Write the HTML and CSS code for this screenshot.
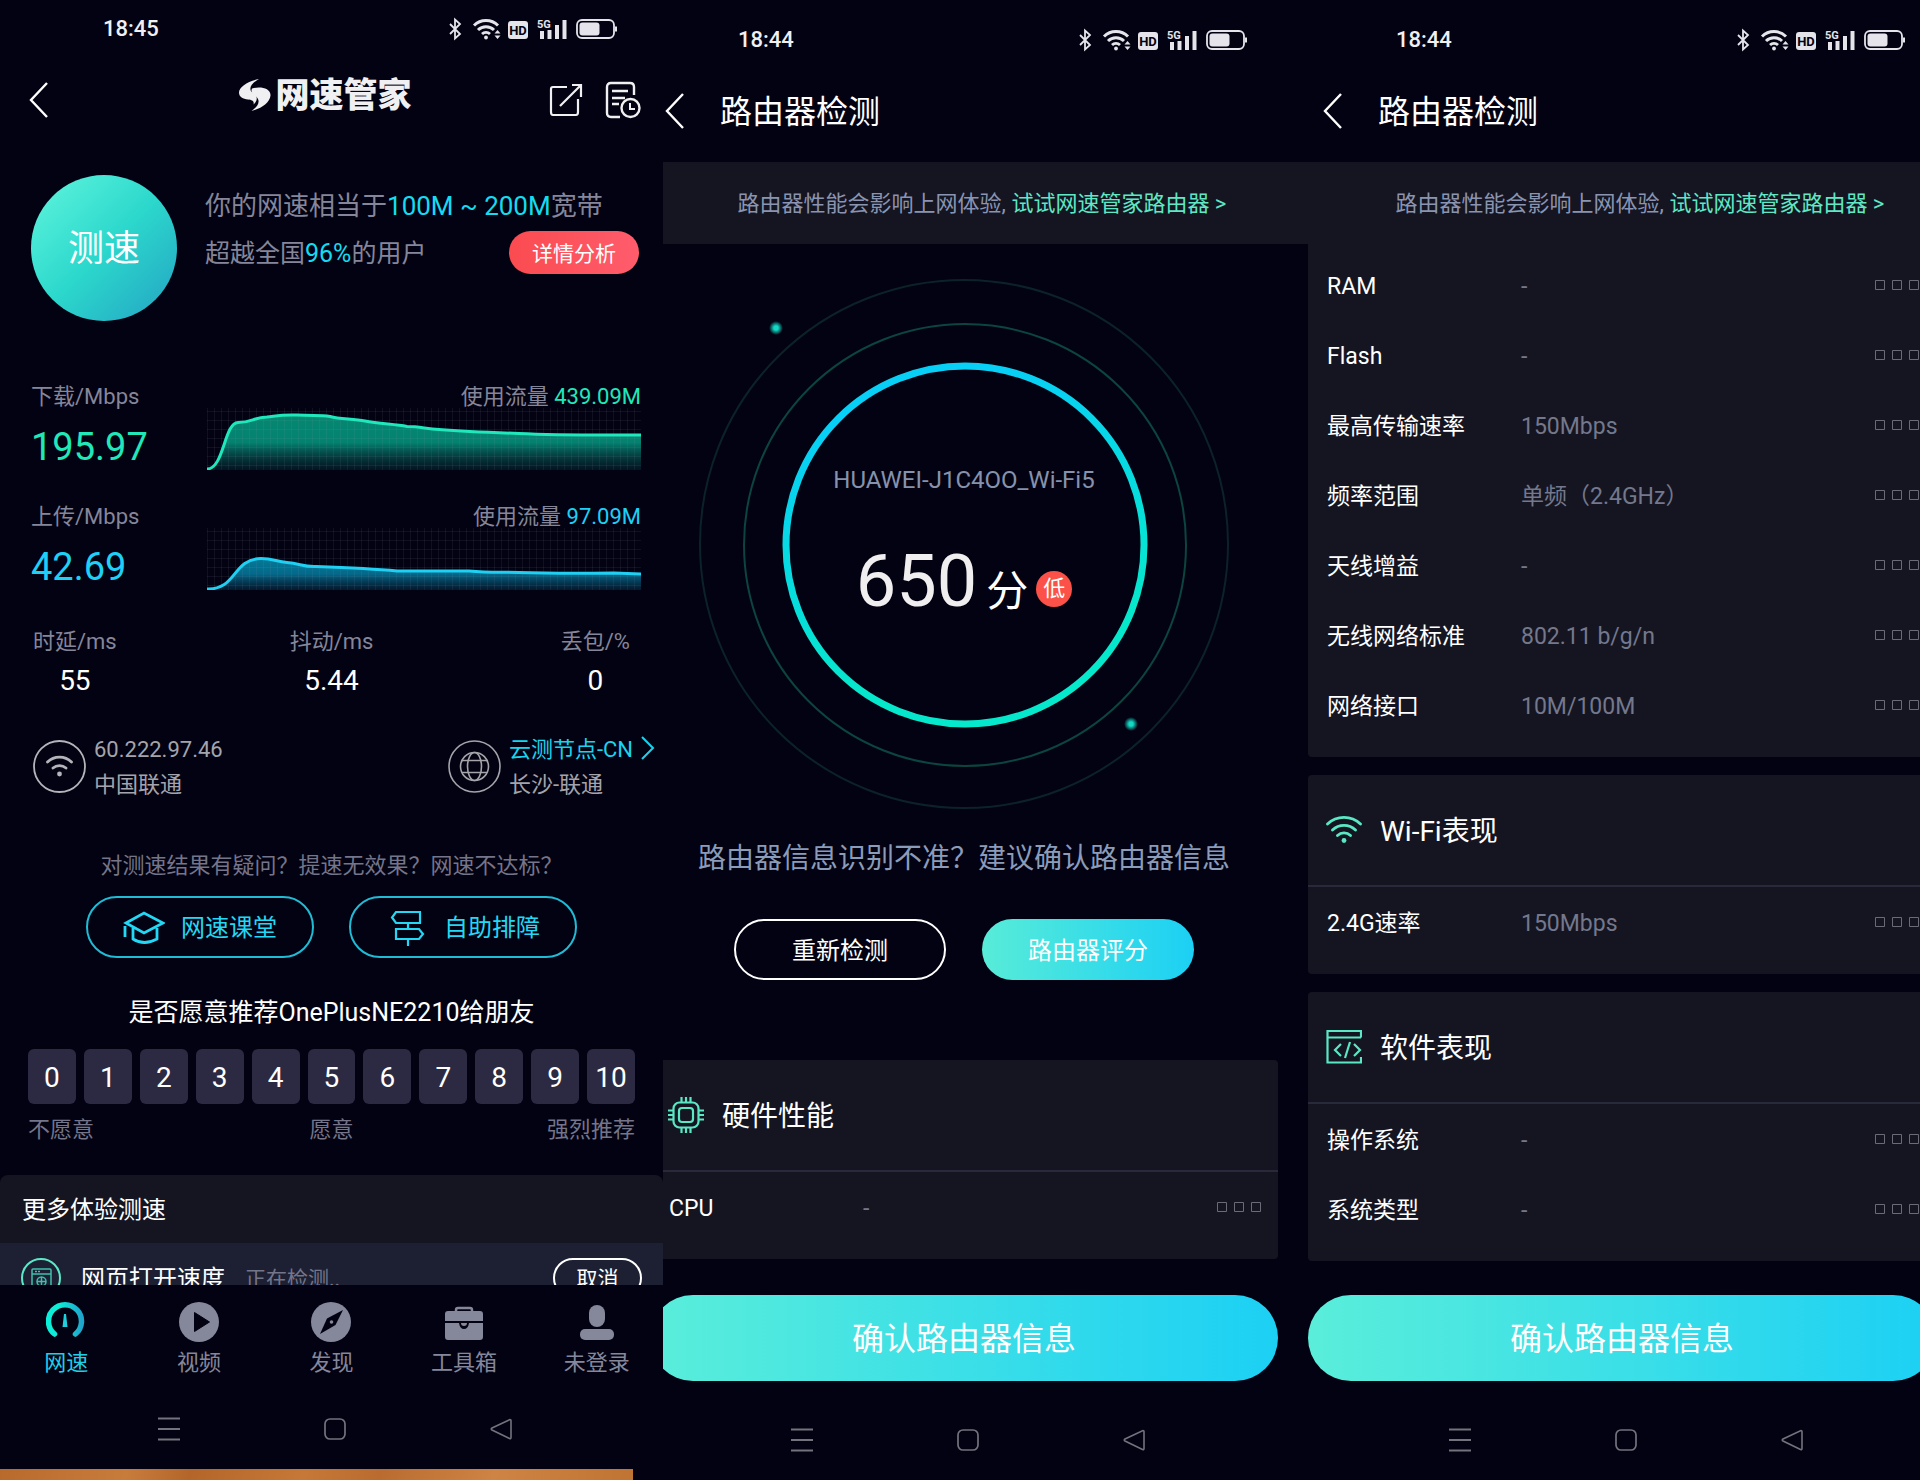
FILE: index.html
```html
<!DOCTYPE html>
<html lang="zh-CN">
	<head>
		<meta charset="utf-8" />
		<title>网速管家</title>
		<meta name="viewport" content="width=device-width, initial-scale=1.0">
		<link rel="stylesheet" href="styles.css">
	</head>
	<body>
		<!-- shared icons -->
		<svg class="sprite" aria-hidden="true">
			<symbol id="statusIcons" viewBox="0 0 168 24">
				<path d="M1 7l10 10-5 4.500V2.500L11 7 1 17" fill="none" stroke="#e4e4ea" stroke-width="1.800"/>
				<g fill="none" stroke="#e4e4ea" stroke-width="3">
					<path d="M25 8.500a17 17 0 0 1 24 0"/>
					<path d="M29 13a11.500 11.500 0 0 1 16 0"/>
					<path d="M33 17a6 6 0 0 1 8 0"/>
				</g>
				<circle cx="37" cy="20.500" r="1.900" fill="#e4e4ea"/>
				<path d="M45.500 16.500l3-3.500 3 3.500zM45.500 18.500l3 3.500 3-3.500z" fill="#e4e4ea"/>
				<rect x="59" y="4" width="20" height="18" rx="3" fill="#e4e4ea"/>
				<text x="69" y="18" text-anchor="middle" font-size="13" font-weight="700" fill="#030212">HD</text>
				<text x="88" y="11" font-size="11" font-weight="700" fill="#e4e4ea">5G</text>
				<path d="M91 14h4v8h-4zM98.500 13h4v9h-4zM106 8h4v14h-4zM113.500 3h4v19h-4z" fill="#e4e4ea"/>
				<rect x="128" y="3" width="37" height="18" rx="5" fill="none" stroke="#e4e4ea" stroke-width="1.800"/>
				<rect x="130.500" y="5.500" width="20" height="13" rx="3" fill="#e4e4ea"/>
				<path d="M167 9.500v5" stroke="#e4e4ea" stroke-width="2"/>
			</symbol>
			<symbol id="back" viewBox="0 0 19 36">
				<path d="M18 1L2 18l16 17" fill="none" stroke="#fff" stroke-width="2.400"/>
			</symbol>
			<symbol id="squares" viewBox="0 0 44 10">
				<path d="M.500 .500h9v9h-9zM17.500 .500h9v9h-9zM34.500 .500h9v9h-9z" fill="none" stroke="#6a6a78"/>
			</symbol>
			<symbol id="navMenu" viewBox="0 0 22 24">
				<path d="M0 1.500h22M0 12h22M0 22.500h22" fill="none" stroke="#73737d" stroke-width="1.800"/>
			</symbol>
			<symbol id="navHome" viewBox="0 0 22 24">
				<rect x="1" y="2" width="20" height="20" rx="5" fill="none" stroke="#73737d" stroke-width="1.700"/>
			</symbol>
			<symbol id="navBack" viewBox="0 0 22 24">
				<path d="M20 2.500q1 0 1 1v17q0 1.500-1.500 1L2 13q-1.500-1 0-2z" fill="none" stroke="#73737d" stroke-width="1.600"/>
			</symbol>
		</svg>

		<main class="screens">
			<!-- speed test result -->
			<section class="screen">
				<div class="phone">
					<div class="status"><span>18:45</span><svg class="status-icons"><use href="#statusIcons"/></svg></div>
					<header class="home-head">
						<button class="back" aria-label="返回"><svg width="19" height="36"><use href="#back"/></svg></button>
						<h1 class="brand">
							<svg width="32" height="34" viewBox="0 0 32 34" fill="#f0f0f2">
								<path d="M20 1C9 3 0 9 0 14.500c0 4.500 4 6.500 9 7 4 .4 6.500 1.500 5.500 5 4-3.500 4.500-8 .5-10.500C8.500 12 11 6 20 1z"/>
								<path d="M13 10.500c8-2.500 19-.5 18.500 7-.5 7-9 13-19 15.500 5-3.500 8.500-8 6.500-12-2-3.500-8.500-5-6-10.500z"/>
							</svg>
							网速管家
						</h1>
						<div class="head-tools">
							<button aria-label="分享">
								<svg width="34" height="36" viewBox="0 0 34 36" fill="none" stroke="#f0f0f2" stroke-width="2.200">
									<path d="M18 5H4q-2 0-2 2v23q0 3 2 3h23q2 0 2-3V17M11 24L31 4M23 3h9v12"/>
								</svg>
							</button>
							<button aria-label="测速记录">
								<svg width="36" height="38" viewBox="0 0 36 38" fill="none" stroke="#f0f0f2" stroke-width="2.400">
									<path d="M15 36H6q-4 0-4-4V6q0-4 4-4h19q4 0 4 4v8M7 10h16M7 17h13M7 23h7"/>
									<circle cx="25.500" cy="27" r="9"/>
									<path d="M25 22v6h5" stroke-width="2"/>
								</svg>
							</button>
						</div>
					</header>

					<div class="hero">
						<button class="start">测速</button>
						<div class="hero-text">
							<p class="grade">你的网速相当于<em>100M ~ 200M</em>宽带</p>
							<div class="rank">
								<p>超越全国<em>96%</em>的用户</p>
								<button class="analyse">详情分析</button>
							</div>
						</div>
					</div>

					<div class="metric down">
						<div class="metric-name">
							<p>下载/Mbps</p>
							<strong>195.97</strong>
						</div>
						<div class="metric-chart">
							<p>使用流量 <em>439.09M</em></p>
							<svg class="chart" viewBox="0 0 434 62" preserveAspectRatio="none">
								<defs>
									<pattern id="grid" width="7" height="9" patternUnits="userSpaceOnUse">
										<path d="M.500 0v9M0 3.500h7" stroke="#a0a0b4" stroke-opacity=".09" fill="none"/>
									</pattern>
									<linearGradient id="downFill" x1="0" y1="0" x2="0" y2="1">
										<stop offset="0" stop-color="#048872"/>
										<stop offset=".5" stop-color="#048270"/>
										<stop offset="1" stop-color="#06303a" stop-opacity=".4"/>
									</linearGradient>
								</defs>
								<path d="M0 61C17 61 17 15 31 14.500c14 0 15-5 29-5.500 15-2 15-2.500 30-2 16 1 23 0 33 1.500 10 3 22 2 35 4.500 14 3 29 3 42 5.500 12 0 18 2 32 3 25 2 50 3 80 4 40 2 80 1.500 122 1.500V62H0z" fill="url(#downFill)"/>
								<rect width="434" height="62" fill="url(#grid)"/>
								<path d="M0 61C17 61 17 15 31 14.500c14 0 15-5 29-5.500 15-2 15-2.500 30-2 16 1 23 0 33 1.500 10 3 22 2 35 4.500 14 3 29 3 42 5.500 12 0 18 2 32 3 25 2 50 3 80 4 40 2 80 1.500 122 1.500" fill="none" stroke="#20e8bd" stroke-width="3"/>
							</svg>
						</div>
					</div>
					<div class="metric up">
						<div class="metric-name">
							<p>上传/Mbps</p>
							<strong>42.69</strong>
						</div>
						<div class="metric-chart">
							<p>使用流量 <em>97.09M</em></p>
							<svg class="chart" viewBox="0 0 434 62" preserveAspectRatio="none">
								<defs>
									<linearGradient id="upFill" x1="0" y1="0" x2="0" y2="1">
										<stop offset="0" stop-color="#047a98"/>
										<stop offset=".5" stop-color="#05688a"/>
										<stop offset="1" stop-color="#05304a" stop-opacity=".5"/>
									</linearGradient>
								</defs>
								<path d="M0 61C30 62 25 31 54 30.500c12 0 15 3 26 4 13 1 15 4 27 4 27 1 55 2 83 4.500h72c20 2 30 1 50 1.500 30 1 60 1 95 .5l27 1V62H0z" fill="url(#upFill)"/>
								<rect width="434" height="62" fill="url(#grid)"/>
								<path d="M0 61C30 62 25 31 54 30.500c12 0 15 3 26 4 13 1 15 4 27 4 27 1 55 2 83 4.500h72c20 2 30 1 50 1.500 30 1 60 1 95 .5l27 1" fill="none" stroke="#1fd0f2" stroke-width="3"/>
							</svg>
						</div>
					</div>

					<dl class="stats">
						<div><dt>时延/ms</dt><dd>55</dd></div>
						<div><dt>抖动/ms</dt><dd>5.44</dd></div>
						<div><dt>丢包/%</dt><dd>0</dd></div>
					</dl>

					<div class="hosts">
						<div class="host">
							<svg width="53" height="53" viewBox="0 0 53 53" fill="none" stroke="#b4b4ba" stroke-width="1.800">
								<circle cx="26.500" cy="26.500" r="25.500"/>
								<g stroke-width="2.800" stroke-linecap="round">
									<path d="M14.500 22a17 17 0 0 1 24 0M20 28a10 10 0 0 1 13 0"/>
								</g>
								<circle cx="26.500" cy="34" r="2.400" fill="#b4b4ba" stroke="none"/>
							</svg>
							<p>60.222.97.46<br>中国联通</p>
						</div>
						<div class="host">
							<svg width="53" height="53" viewBox="0 0 53 53" fill="none" stroke="#a4a4aa" stroke-width="1.600">
								<circle cx="26.500" cy="26.500" r="25.500"/>
								<circle cx="26.500" cy="26.500" r="14"/>
								<ellipse cx="26.500" cy="26.500" rx="7" ry="14"/>
								<path d="M14 20.500h25M14 32.500h25"/>
							</svg>
							<p><a href="#">云测节点-CN</a><br>长沙-联通</p>
							<svg class="host-more" width="14" height="24" viewBox="0 0 14 24" fill="none" stroke="#18d4ee" stroke-width="2"><path d="M1 1l11 11L1 23"/></svg>
						</div>
					</div>

					<p class="doubt">对测速结果有疑问？提速无效果？网速不达标？</p>
					<div class="helpers">
						<button>
							<svg width="42" height="34" viewBox="0 0 42 34" fill="none" stroke="#22d8f4" stroke-width="2.800">
								<path d="M3 12L21 2l19 10-19 10zM10 17v11q11 7 24 0V17"/>
								<path d="M2 15v11"/>
							</svg>
							网速课堂
						</button>
						<button>
							<svg width="42" height="36" viewBox="0 0 42 36" fill="none" stroke="#22d8f4" stroke-width="2.200">
								<path d="M10 2h24v11H10l-4-5.500zM10 19h23l4 5-4 5H10zM22 13v6M22 29v7"/>
							</svg>
							自助排障
						</button>
					</div>

					<p class="survey-title">是否愿意推荐OnePlusNE2210给朋友</p>
					<div class="survey">
						<button>0</button>
						<button>1</button>
						<button>2</button>
						<button>3</button>
						<button>4</button>
						<button>5</button>
						<button>6</button>
						<button>7</button>
						<button>8</button>
						<button>9</button>
						<button>10</button>
					</div>
					<div class="survey-scale"><span>不愿意</span><span>愿意</span><span>强烈推荐</span></div>

					<div class="more">
						<h2>更多体验测速</h2>
						<div class="more-row">
							<svg width="40" height="40" viewBox="0 0 40 40" fill="none" stroke="#3fbfae" stroke-width="1.500">
								<circle cx="20" cy="20" r="19" stroke="#5ae8c8" stroke-width="2"/>
								<path d="M11 32V12q0-1 1-1h17q1 0 1 1v20M11 16h19"/>
								<path d="M14 13.500h6" stroke-dasharray="2 1"/>
								<circle cx="20.500" cy="23.500" r="4.500"/>
								<path d="M16 23.500h9M20.500 19v9"/>
							</svg>
							<span class="more-name">网页打开速度</span>
							<span class="more-state">正在检测..</span>
							<button>取消</button>
						</div>
					</div>

					<nav class="tabs">
						<a href="#" class="on">
							<svg width="40" height="48" viewBox="0 0 40 48" fill="none">
								<linearGradient id="gaugeTab"><stop offset=".3" stop-color="#0ceed8"/><stop offset="1" stop-color="#1fa6cc"/></linearGradient>
								<path d="M8.500 37A16.500 16.500 0 1 1 29.500 37" stroke="url(#gaugeTab)" stroke-width="5.500" stroke-linecap="round"/>
								<path d="M18 17h2l1.500 13h-5z" fill="#1fd0dc"/>
							</svg>
							网速
						</a>
						<a href="#">
							<svg width="40" height="48" viewBox="0 0 40 48"><circle cx="20" cy="25" r="20" fill="#85879b"/><path d="M15.500 15.500l15 9.500-15 9.500z" fill="#030212" stroke="#030212" stroke-linejoin="round"/></svg>
							视频
						</a>
						<a href="#">
							<svg width="40" height="48" viewBox="0 0 40 48"><circle cx="20" cy="25" r="20" fill="#85879b"/><path d="M32 13l-7.500 15L9 37l7-15.500z" fill="#030212"/><circle cx="20.500" cy="25" r="1.800" fill="#85879b"/></svg>
							发现
						</a>
						<a href="#">
							<svg width="40" height="48" viewBox="0 0 40 48" fill="#85879b">
								<path d="M12 16v-3q0-2 2-2h12q2 0 2 2v3" fill="none" stroke="#85879b" stroke-width="2.500"/>
								<path d="M4 14h32q3 0 3 3v7H1v-7q0-3 3-3zM1 26h14q1 6 5 6t5-6h14v14q0 3-3 3H4q-3 0-3-3z"/>
								<path d="M17 26h6q0 3-3 3t-3-3z"/>
							</svg>
							工具箱
						</a>
						<a href="#">
							<svg width="40" height="48" viewBox="0 0 40 48" fill="#85879b"><rect x="12" y="8" width="16" height="22" rx="8"/><rect x="3" y="32" width="34" height="11" rx="5"/></svg>
							未登录
						</a>
					</nav>
					<div class="sysnav">
						<svg><use href="#navMenu"/></svg>
						<svg><use href="#navHome"/></svg>
						<svg><use href="#navBack"/></svg>
					</div>
					<div class="wood"></div>
				</div>
			</section>

			<!-- router score -->
			<section class="screen">
				<div class="phone router cut-left">
					<div class="status"><span>18:44</span><svg class="status-icons"><use href="#statusIcons"/></svg></div>
					<header class="router-head">
						<button class="back" aria-label="返回"><svg width="19" height="36"><use href="#back"/></svg></button>
						<h1>路由器检测</h1>
					</header>
					<p class="banner">路由器性能会影响上网体验, <a href="#">试试网速管家路由器 &gt;</a></p>

					<div class="gauge">
						<svg width="530" height="530" viewBox="0 0 530 530" fill="none">
							<defs>
								<linearGradient id="ring" x1=".35" y1="0" x2=".65" y2="1">
									<stop offset=".1" stop-color="#08cff5"/>
									<stop offset=".8" stop-color="#06e8cb"/>
								</linearGradient>
								<radialGradient id="dot">
									<stop offset=".3" stop-color="#12d8c4"/>
									<stop offset="1" stop-color="#12d8c4" stop-opacity="0"/>
								</radialGradient>
							</defs>
							<circle cx="265" cy="265" r="264" stroke="#0c2229" stroke-width="2"/>
							<circle cx="266" cy="266" r="221" stroke="#0c443f" stroke-width="2"/>
							<circle cx="266" cy="266" r="179" stroke="url(#ring)" stroke-width="7"/>
							<circle cx="77" cy="49" r="7" fill="url(#dot)"/>
							<circle cx="432" cy="445" r="7" fill="url(#dot)"/>
						</svg>
						<div class="gauge-text">
							<p class="ssid">HUAWEI-J1C4OO_Wi-Fi5</p>
							<p class="score"><strong>650</strong><span>分</span><b>低</b></p>
						</div>
					</div>

					<p class="hint">路由器信息识别不准？建议确认路由器信息</p>
					<div class="router-actions">
						<button>重新检测</button>
						<button class="fill">路由器评分</button>
					</div>

					<section class="card">
						<h2>
							<svg width="36" height="36" viewBox="0 0 36 36" fill="none" stroke="#5ae8c4" stroke-width="2.200">
								<rect x="5.500" y="5.500" width="25" height="25" rx="6"/>
								<rect x="11" y="11" width="14" height="14" rx="3"/>
								<path d="M13.500 0v5M18 0v5M22.500 0v5M13.500 31v5M18 31v5M22.500 31v5M0 13.500h5M0 18h5M0 22.500h5M31 13.500h5M31 18h5M31 22.500h5"/>
							</svg>
							<span>硬件性能</span>
						</h2>
						<table>
							<tr><th>CPU</th><td>-</td><td class="more-cell"><svg><use href="#squares"/></svg></td></tr>
						</table>
					</section>

					<footer class="foot">
						<button class="confirm">确认路由器信息</button>
						<div class="sysnav">
							<svg><use href="#navMenu"/></svg>
							<svg><use href="#navHome"/></svg>
							<svg><use href="#navBack"/></svg>
						</div>
					</footer>
				</div>
			</section>

			<!-- router details -->
			<section class="screen">
				<div class="phone router cut-right">
					<div class="status"><span>18:44</span><svg class="status-icons"><use href="#statusIcons"/></svg></div>
					<header class="router-head">
						<button class="back" aria-label="返回"><svg width="19" height="36"><use href="#back"/></svg></button>
						<h1>路由器检测</h1>
					</header>
					<p class="banner">路由器性能会影响上网体验, <a href="#">试试网速管家路由器 &gt;</a></p>

					<div class="cards">
						<section class="card scrolled">
							<table>
								<tr><th>RAM</th><td>-</td><td class="more-cell"><svg><use href="#squares"/></svg></td></tr>
								<tr><th>Flash</th><td>-</td><td class="more-cell"><svg><use href="#squares"/></svg></td></tr>
								<tr><th>最高传输速率</th><td>150Mbps</td><td class="more-cell"><svg><use href="#squares"/></svg></td></tr>
								<tr><th>频率范围</th><td>单频（2.4GHz）</td><td class="more-cell"><svg><use href="#squares"/></svg></td></tr>
								<tr><th>天线增益</th><td>-</td><td class="more-cell"><svg><use href="#squares"/></svg></td></tr>
								<tr><th>无线网络标准</th><td>802.11 b/g/n</td><td class="more-cell"><svg><use href="#squares"/></svg></td></tr>
								<tr><th>网络接口</th><td>10M/100M</td><td class="more-cell"><svg><use href="#squares"/></svg></td></tr>
							</table>
						</section>
						<section class="card">
							<h2>
								<svg width="36" height="36" viewBox="0 0 36 36" fill="none" stroke="#5ae8c4" stroke-width="2.800" stroke-linecap="round">
									<path d="M1.500 12a24 24 0 0 1 33 0M6.500 18a16.500 16.500 0 0 1 23 0M11.500 23.500a9.500 9.500 0 0 1 13 0"/>
									<circle cx="18" cy="28.500" r="2.400" fill="#5ae8c4" stroke="none"/>
								</svg>
								<span>Wi-Fi表现</span>
							</h2>
							<table>
								<tr><th>2.4G速率</th><td>150Mbps</td><td class="more-cell"><svg><use href="#squares"/></svg></td></tr>
							</table>
						</section>
						<section class="card">
							<h2>
								<svg width="36" height="36" viewBox="0 0 36 36" fill="none" stroke="#5ae8c4" stroke-width="2.200">
									<path d="M35 8.500V2H1.500v31.500H35V28M1.500 8.500H35"/>
									<path d="M15 15l-6 6 6 6M24 13l-5 16M28 15l6 6-6 6"/>
								</svg>
								<span>软件表现</span>
							</h2>
							<table>
								<tr><th>操作系统</th><td>-</td><td class="more-cell"><svg><use href="#squares"/></svg></td></tr>
								<tr><th>系统类型</th><td>-</td><td class="more-cell"><svg><use href="#squares"/></svg></td></tr>
							</table>
						</section>
					</div>

					<footer class="foot">
						<button class="confirm">确认路由器信息</button>
						<div class="sysnav">
							<svg><use href="#navMenu"/></svg>
							<svg><use href="#navHome"/></svg>
							<svg><use href="#navBack"/></svg>
						</div>
					</footer>
				</div>
			</section>
		</main>
	</body>
</html>
```

FILE: styles.css
```css
* {
	box-sizing:border-box;
}
body {
	margin:0;
	background:#030212;
	color:#fff;
	font-family:Roboto, "Noto Sans CJK SC", sans-serif;
	font-size:22px;
	line-height:28px;
}
h1, h2, p, dl, dd {
	margin:0;
	font-weight:400;
}
em {
	font-style:normal;
}
a {
	color:inherit;
	text-decoration:none;
}
button {
	padding:2px 0 0;
	border:0;
	background:none;
	color:inherit;
	font:inherit;
	white-space:nowrap;
	cursor:pointer;
}
svg {
	display:block;
	flex:none;
}
.sprite {
	display:none;
}

/* three phones side by side, the outer edges of the last two are cut */
.screens {
	display:grid;
	grid-template-columns:663fr 630fr 627fr;
	min-height:100vh;
}
.screen {
	display:flex;
	min-width:0;
	overflow:hidden;
}
.phone {
	display:flex;
	flex:1;
	flex-direction:column;
	min-width:0;
}
.cut-left {
	margin-left:-28px;
}
.cut-right {
	margin-right:-31px;
}
.router {
	padding-top:11px;
}

.status {
	display:flex;
	align-items:center;
	justify-content:space-between;
	height:56px;
	padding:1px 46px 0 103px;
	color:#f0f0f2;
	font-size:22px;
	font-weight:500;
}
.status-icons {
	width:168px;
	height:24px;
}
.home-head {
	display:grid;
	grid-template-columns:1fr auto 1fr;
	align-items:center;
	height:88px;
	padding:0 22px 0 29px;
}
.back {
	justify-self:start;
	padding:0;
}
.brand {
	display:flex;
	align-items:center;
	gap:5px;
	margin:0 20px 10px 0;
	color:#f0f0f2;
	font-size:34px;
	font-weight:900;
}
.head-tools {
	display:flex;
	gap:22px;
	justify-self:end;
}
.head-tools button {
	padding:0;
}

.hero {
	display:flex;
	gap:28px;
	margin-top:31px;
	padding:0 24px 0 31px;
	color:#85869a;
}
.start {
	flex:none;
	width:146px;
	height:146px;
	border-radius:50%;
	background:linear-gradient(135deg, #56f0da 10%, #2cd8cc 50%, #24a8c4 95%);
	color:#fff;
	font-size:36px;
}
.hero-text {
	flex:1;
	padding-top:12px;
}
.hero em {
	color:#14dcf0;
}
.grade {
	font-size:26px;
	line-height:38px;
	white-space:nowrap;
}
.rank {
	display:flex;
	align-items:center;
	justify-content:space-between;
	margin-top:6px;
	font-size:25px;
}
.rank p {
	padding-top:2px;
}
.analyse {
	width:130px;
	height:43px;
	border-radius:22px;
	background:linear-gradient(90deg, #fa4b50, #ff5c6c);
	color:#fff;
	font-size:21px;
}

.metric {
	display:flex;
	margin-top:32px;
	padding:0 22px 0 31px;
	color:#85869a;
}
.metric.down {
	margin-top:61px;
}
.metric-name {
	flex:none;
	width:176px;
	line-height:30px;
}
.metric-name strong {
	display:block;
	margin-top:12px;
	font-size:38px;
	font-weight:400;
	line-height:46px;
}
.metric-chart {
	flex:1;
	text-align:right;
}
.metric-chart p {
	height:26px;
	line-height:30px;
}
.chart {
	width:100%;
	height:62px;
}
.down strong, .down em {
	color:#20e8b8;
}
.up strong, .up em {
	color:#1ed0f5;
}

.stats {
	display:grid;
	grid-template-columns:1fr auto 1fr;
	margin-top:38px;
	padding:0 33px;
	text-align:center;
}
.stats div:first-child {
	justify-self:start;
}
.stats div:last-child {
	justify-self:end;
}
.stats dt {
	color:#85869a;
}
.stats dd {
	margin-top:7px;
	font-size:28px;
	line-height:36px;
}

.hosts {
	display:flex;
	justify-content:space-between;
	margin-top:31px;
	padding:0 8px 0 33px;
	color:#a4a4ac;
	line-height:35px;
}
.host {
	display:flex;
	align-items:center;
	gap:8px;
}
.host p {
	padding-top:2px;
}
.host a {
	color:#18d4ee;
}
.host-more {
	align-self:flex-start;
	margin-top:6px;
}

.doubt {
	margin-top:47px;
	color:#74758a;
	font-size:22px;
	line-height:34px;
	text-align:center;
}
.helpers {
	display:flex;
	justify-content:center;
	gap:35px;
	margin-top:13px;
}
.helpers button {
	display:flex;
	align-items:center;
	justify-content:center;
	gap:16px;
	width:228px;
	height:62px;
	border:2px solid #20bcd6;
	border-radius:31px;
	color:#22d8f4;
	font-size:24px;
}

.survey-title {
	margin-top:37px;
	font-size:25px;
	line-height:36px;
	text-align:center;
}
.survey {
	display:flex;
	gap:8px;
	margin-top:18px;
	padding:0 28px;
}
.survey button {
	flex:1;
	height:55px;
	border-radius:6px;
	background:#2b2a42;
	font-size:28px;
}
.survey-scale {
	display:grid;
	grid-template-columns:1fr auto 1fr;
	margin-top:12px;
	padding:0 28px;
	color:#74758a;
}
.survey-scale span:last-child {
	text-align:right;
}

.more {
	margin-top:31px;
	border-radius:8px 8px 0 0;
	background:#151522;
}
.more h2 {
	padding:2px 22px 0;
	font-size:24px;
	line-height:66px;
}
/* the list goes on under the tab bar */
.more-row {
	display:flex;
	align-items:flex-start;
	height:42px;
	padding:15px 21px 0;
	background:#1d2033;
	line-height:42px;
	overflow:hidden;
}
.more-name {
	margin:0 20px;
	font-size:24px;
}
.more-state {
	flex:1;
	color:#74758a;
	font-size:21px;
}
.more-row button {
	width:89px;
	height:40px;
	padding:0;
	border:2px solid #fff;
	border-radius:20px;
	font-size:21px;
	line-height:38px;
}

.tabs {
	display:grid;
	grid-template-columns:repeat(5, 1fr);
	padding:12px 0;
	color:#85879b;
	font-size:22px;
}
.tabs a {
	display:flex;
	flex-direction:column;
	align-items:center;
	gap:4px;
}
.tabs .on {
	color:#1fd0e8;
}
.sysnav {
	display:flex;
	align-items:center;
	justify-content:center;
	gap:144px;
	height:80px;
	padding-left:7px;
}
.sysnav svg {
	width:22px;
	height:24px;
}
.wood {
	flex:1;
	min-height:11px;
	margin-right:30px;
	background:linear-gradient(100deg, #b86a2c, #c87c3c 20%, #b4662a 30%, #c67838 48%, #ba6c30 60%, #ce8444 78%, #c07434);
}

.router-head {
	display:flex;
	align-items:center;
	gap:36px;
	height:88px;
	padding-left:30px;
}
.router-head h1 {
	padding-top:2px;
	font-size:32px;
}
.banner {
	margin-top:7px;
	padding:2px 0 0 36px;
	background:#151522;
	color:#8a94b0;
	font-size:22px;
	line-height:80px;
	text-align:center;
	white-space:nowrap;
}
.banner a {
	color:#5ee8c4;
}
.gauge {
	display:grid;
	place-items:center;
	margin-top:35px;
}
.gauge > * {
	grid-area:1 / 1;
}
.gauge-text {
	padding-top:6px;
	text-align:center;
}
.ssid {
	color:#8692ac;
	font-size:24px;
	line-height:36px;
}
.score {
	display:flex;
	align-items:baseline;
	justify-content:center;
	margin-top:44px;
	line-height:80px;
}
.score strong {
	color:#f0eeee;
	font-size:72px;
	font-weight:400;
}
.score span {
	margin:0 8px 0 9px;
	font-size:42px;
}
.score b {
	align-self:center;
	width:36px;
	height:36px;
	margin-top:4px;
	border-radius:50%;
	background:#fb5148;
	font-weight:400;
	line-height:36px;
}
.hint {
	margin-top:30px;
	color:#8a9cba;
	font-size:28px;
	line-height:40px;
	text-align:center;
	white-space:nowrap;
}
.router-actions {
	display:flex;
	justify-content:center;
	gap:36px;
	margin-top:40px;
}
.router-actions button {
	width:212px;
	height:61px;
	border:2px solid #fff;
	border-radius:31px;
	font-size:24px;
}
.router-actions .fill {
	border:0;
	background:linear-gradient(90deg, #58ecd8, #1cd0f4);
}

.card {
	padding-bottom:17px;
	border-radius:4px;
	background:#151522;
}
.router > .card {
	margin:80px 15px 0;
}
.cards {
	display:flex;
	flex-direction:column;
	gap:18px;
	padding:0 15px;
}
.scrolled {
	padding-top:6px;
	border-radius:0 0 4px 4px;
}
.card h2 {
	display:flex;
	align-items:center;
	gap:18px;
	height:112px;
	padding-left:18px;
	border-bottom:2px solid #28293a;
	font-size:28px;
}
.card h2 span {
	padding-top:4px;
}
.card table {
	width:100%;
	border-collapse:collapse;
	font-size:23px;
}
.card th, .card td {
	height:70px;
	padding:3px 0 0;
	text-align:left;
}
.card th {
	width:213px;
	padding-left:19px;
	font-weight:400;
}
.card td {
	color:#74788c;
}
.card .more-cell {
	width:61px;
	padding:0;
}
.more-cell svg {
	width:44px;
	height:10px;
}

.foot {
	margin-top:auto;
	padding-top:34px;
}
.confirm {
	display:block;
	width:calc(100% - 30px);
	height:86px;
	margin:0 15px 19px;
	border-radius:43px;
	background:linear-gradient(90deg, #5aeeda, #1cd0f4);
	font-size:32px;
}
```
